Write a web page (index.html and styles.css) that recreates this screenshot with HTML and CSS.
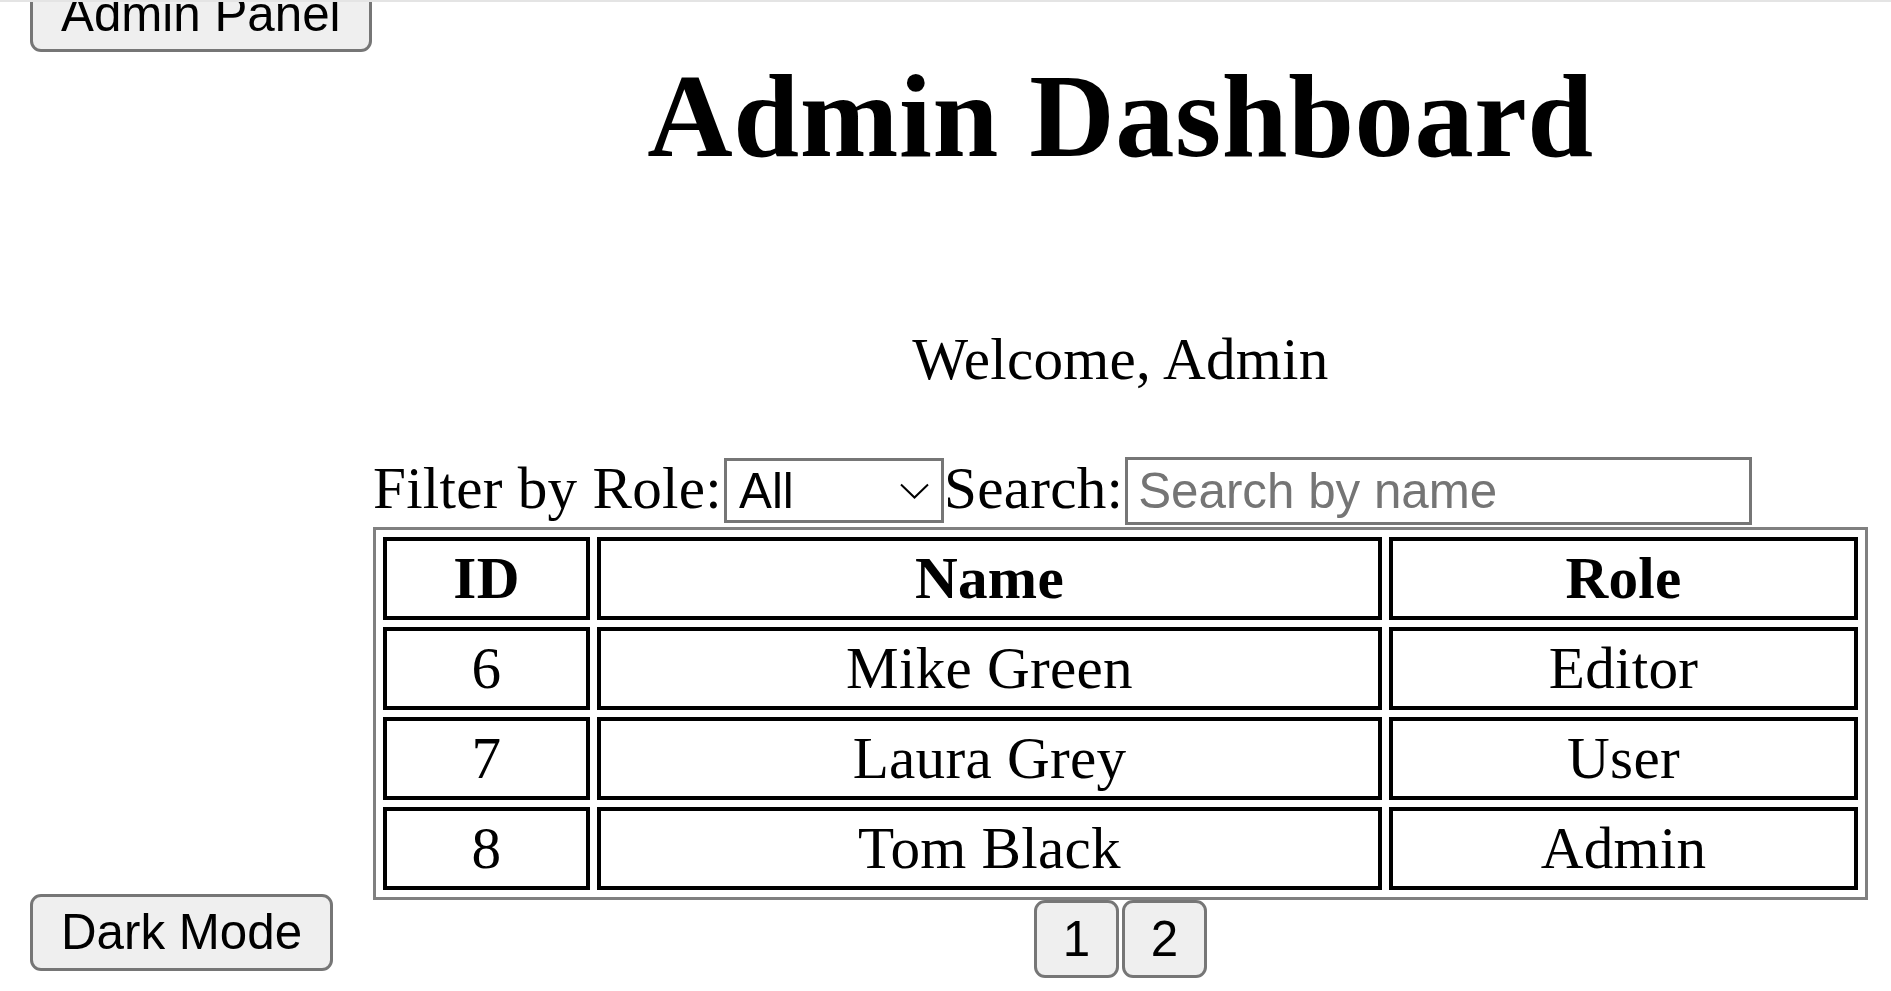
FILE: index.html
```html
<!DOCTYPE html>
<html lang="en">
<head>
<meta charset="utf-8">
<title>Admin Dashboard</title>
<link rel="stylesheet" href="styles.css">
</head>
<body>
<div class="page">
  <aside class="sidebar">
    <button class="btn">Admin Panel</button>
    <button class="btn">Dark Mode</button>
  </aside>
  <main class="main">
    <h1 class="title">Admin Dashboard</h1>
    <p class="welcome">Welcome, Admin</p>
    <div class="filters"><label class="filter-label" for="role">Filter by Role:</label><select id="role" class="role-select"><option>All</option><option>Admin</option><option>Editor</option><option>User</option></select><label class="filter-label" for="search">Search:</label><input id="search" class="search-input" type="text" placeholder="Search by name"></div>
    <table class="users">
      <thead>
        <tr><th class="c-id">ID</th><th class="c-name">Name</th><th class="c-role">Role</th></tr>
      </thead>
      <tbody>
        <tr><td>6</td><td>Mike Green</td><td>Editor</td></tr>
        <tr><td>7</td><td>Laura Grey</td><td>User</td></tr>
        <tr><td>8</td><td>Tom Black</td><td>Admin</td></tr>
      </tbody>
    </table>
    <div class="pagination"><button class="btn page-btn">1</button><button class="btn page-btn">2</button></div>
  </main>
</div>
</body>
</html>
```
FILE: styles.css
```css
html, body {
  background: #fff;
}
body {
  margin: 0;
  border-top: 2px solid #e4e4e4;
  font-family: "Liberation Serif", "Times New Roman", serif;
  font-size: 59.2px;
  letter-spacing: 0.25px;
  color: #000;
  overflow: hidden;
}
.page {
  display: flex;
  margin-top: -27px;
  padding: 0 23px 0 30px;
}
.sidebar {
  flex: none;
  width: 342px;
  display: flex;
  flex-direction: column;
  justify-content: space-between;
  align-items: flex-start;
  padding-bottom: 7px;
}
.main {
  flex: 1;
  min-width: 0;
  margin-left: 1px;
}
.btn {
  font-family: "Liberation Sans", Arial, sans-serif;
  font-size: 49.3px;
  letter-spacing: normal;
  line-height: 1;
  height: 77px;
  padding: 0 28px;
  border: 3px solid #767676;
  border-radius: 11px;
  background: #efefef;
  color: #000;
  margin: 0;
}
.title {
  font-size: 118.4px;
  font-weight: bold;
  letter-spacing: 0.6px;
  line-height: 136px;
  text-align: center;
  margin: 73px 0 0;
}
.welcome {
  margin: 141px 0 0;
  line-height: 68px;
  text-align: center;
}
.filters {
  display: flex;
  align-items: baseline;
  margin: 61px 0 2px;
}
.filter-label {
  line-height: 68px;
  margin-right: 2px;
}
.role-select {
  -webkit-appearance: none;
  appearance: none;
  box-sizing: border-box;
  width: 220px;
  height: 65px;
  margin: 0;
  padding: 0 0 0 12px;
  border: 3px solid #767676;
  border-radius: 0;
  font-family: "Liberation Sans", Arial, sans-serif;
  font-size: 49.3px;
  letter-spacing: normal;
  line-height: 59px;
  color: #000;
  background: #fff url("data:image/svg+xml;utf8,<svg xmlns='http://www.w3.org/2000/svg' width='29' height='16' viewBox='0 0 29 16'><path d='M1 1.5L14.5 14.5L28 1.5' fill='none' stroke='%23000' stroke-width='2'/></svg>") no-repeat right 12px center;
}
.search-input {
  box-sizing: border-box;
  width: 627px;
  height: 68px;
  margin: 0;
  padding: 0 10px;
  border: 3px solid #767676;
  border-radius: 0;
  font-family: "Liberation Sans", Arial, sans-serif;
  font-size: 49.3px;
  letter-spacing: normal;
  line-height: 62px;
  color: #000;
  background: #fff;
}
.search-input::placeholder {
  color: #757575;
}
.users {
  width: 100%;
  table-layout: fixed;
  border: 3px solid #808080;
  border-spacing: 7.5px;
}
.users th,
.users td {
  border: 4px solid #000;
  padding: 4px;
  line-height: 67px;
  text-align: center;
  font-size: 59.2px;
}
.users th {
  font-weight: bold;
}
.c-id {
  width: 191px;
}
.c-name {
  width: 769px;
}
.pagination {
  display: flex;
  justify-content: center;
  gap: 3px;
}
.page-btn {
  width: 85px;
  height: 78px;
  padding: 0;
}
```
